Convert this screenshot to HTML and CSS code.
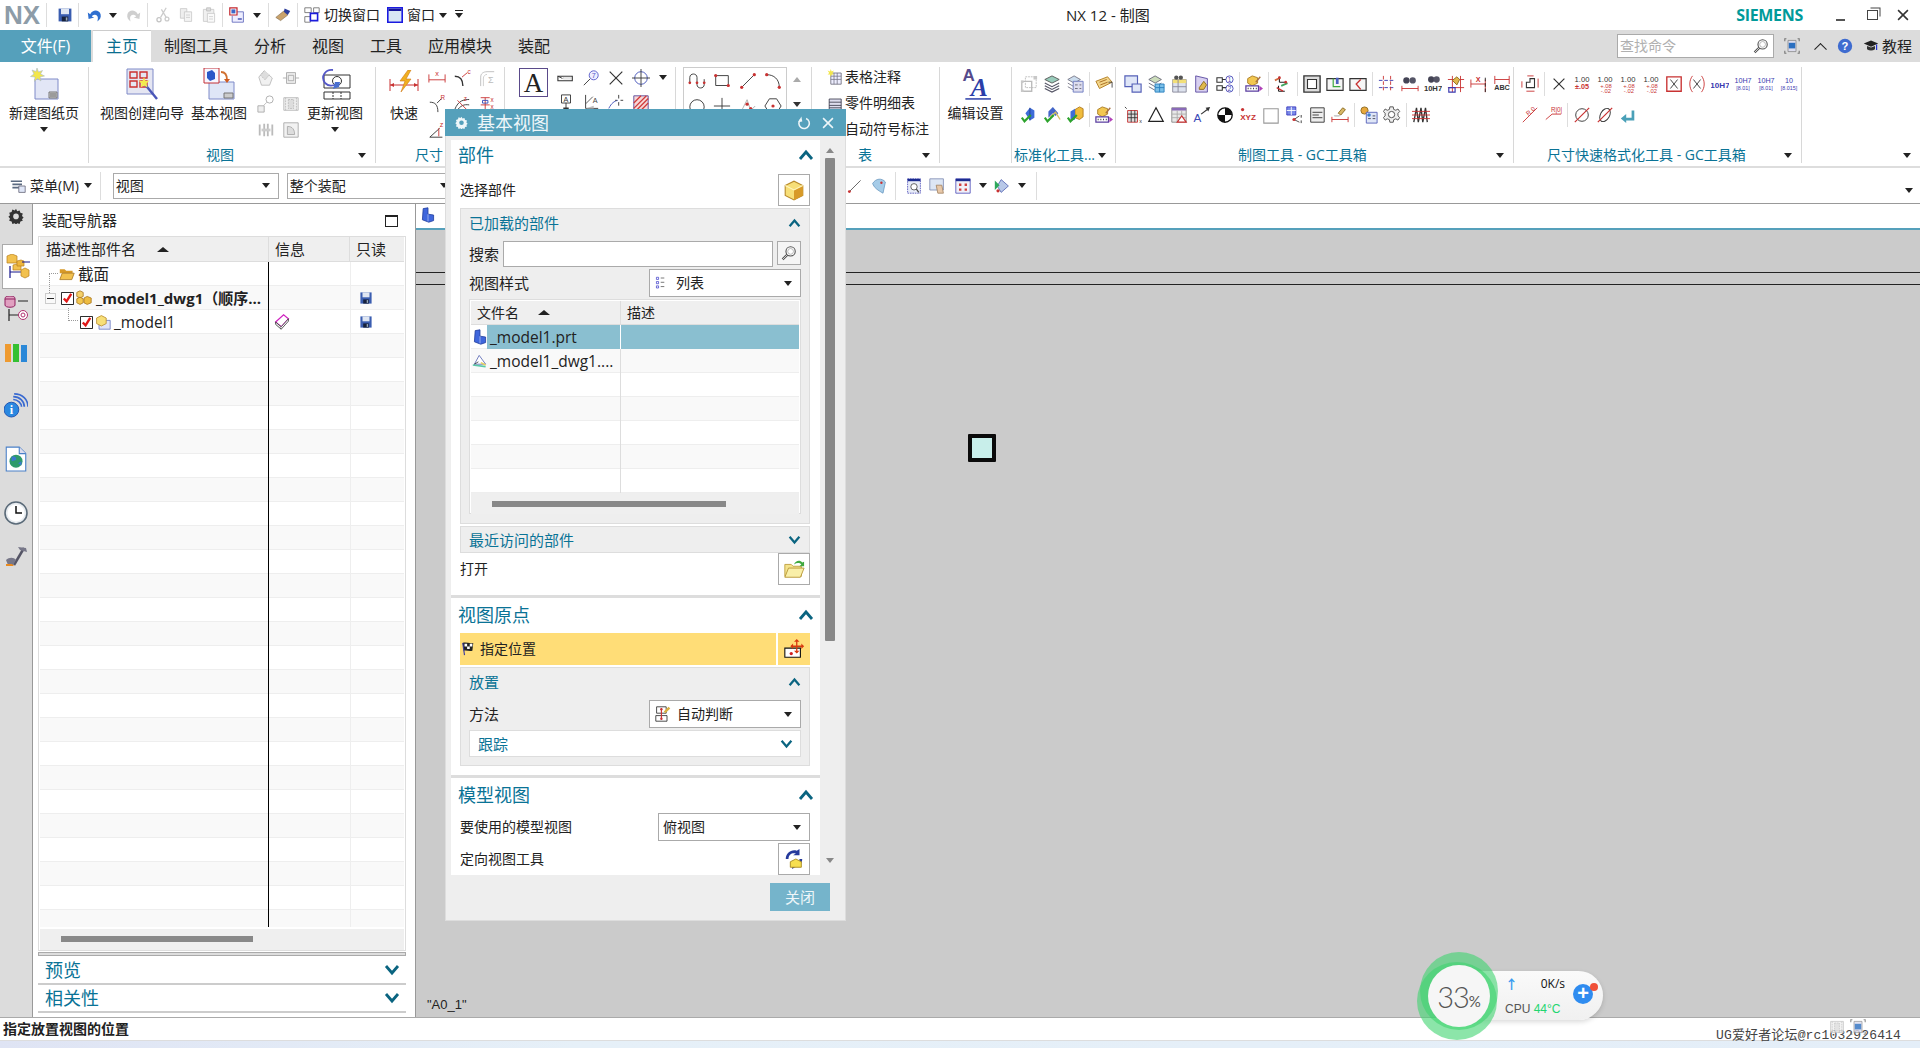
FILE: index.html
```html
<!DOCTYPE html>
<html lang="zh-CN">
<head>
<meta charset="utf-8">
<title>NX 12 - 制图</title>
<link rel="stylesheet" href="styles.css">
</head>
<body>
<svg class="defs" xmlns="http://www.w3.org/2000/svg">
<defs>
<symbol id="save" viewBox="0 0 20 20"><path d="M2 2h16v16H2z" fill="#3a5db0"/><path d="M5 2h10v7H5z" fill="#dfe6f2"/><path d="M6 12h8v6H6z" fill="#16213c"/><path d="M11 13h2v4h-2z" fill="#9ab"/></symbol>
<symbol id="undo" viewBox="0 0 20 20"><path d="M4 9c3-6 11-6 13 0 1 4-1 7-4 9 1-4 1-7-2-8-2-1-4 0-5 2l3 1-7 2-1-8z" fill="#2f6fd0"/></symbol>
<symbol id="redo" viewBox="0 0 20 20"><path d="M16 9C13 3 5 3 3 9c-1 4 1 7 4 9-1-4-1-7 2-8 2-1 4 0 5 2l-3 1 7 2 1-8z" fill="#cfcfcf"/></symbol>
<symbol id="cut" viewBox="0 0 20 20"><path d="M14 1 7 13M8 3l6 10" stroke="#ccc" stroke-width="1.6" fill="none"/><circle cx="5" cy="16" r="2.6" fill="none" stroke="#c4c4c4" stroke-width="1.6"/><circle cx="15" cy="15" r="2.4" fill="none" stroke="#ccc" stroke-width="1.6"/></symbol>
<symbol id="copy" viewBox="0 0 20 20"><path d="M3 2h8v12H3z" fill="#eee" stroke="#c8c8c8"/><path d="M8 6h9v12H8z" fill="#f4f4f4" stroke="#c8c8c8"/><path d="M10 10h5M10 13h5" stroke="#ccc"/></symbol>
<symbol id="paste" viewBox="0 0 20 20"><path d="M3 3h13v15H3z" fill="#f0f0f0" stroke="#c8c8c8"/><path d="M7 1h5v4H7z" fill="#ddd" stroke="#bbb"/><path d="M8 8h9v11H8z" fill="#fafafa" stroke="#c8c8c8"/><path d="M10 12h5M10 15h5" stroke="#ccc"/></symbol>
<symbol id="layers" viewBox="0 0 20 20"><path d="M8 6h10v13H4V11" fill="#eef" stroke="#5560b8"/><path d="M1 1h9v9H1z" fill="#fff" stroke="#c2262e" stroke-width="1.5"/><path d="M3 3h5v5H3z" fill="#3d68c8"/><path d="M11 15h5" stroke="#5560b8" stroke-width="2"/></symbol>
<symbol id="brush" viewBox="0 0 20 20"><path d="M1 13 11 5l5 5-9 7z" fill="#c9a26b" stroke="#7a6244" stroke-width=".7"/><path d="M12 2l7 3-3 5-5-4z" fill="#2b3c9a"/></symbol>
<symbol id="switch" viewBox="0 0 20 20"><path d="M1 1h8v6H1zM12 1h7v6h-7zM1 12h7v7H1z" fill="#fff" stroke="#666"/><path d="M8 8h9v9H8z" fill="#fff" stroke="#1c1cdc" stroke-width="2"/></symbol>
<symbol id="window" viewBox="0 0 20 20"><path d="M1 1h18v18H1z" fill="#d8e6f4" stroke="#1a1ae0" stroke-width="2"/><path d="M2 2h16v3H2z" fill="#15159a"/></symbol>
<symbol id="help" viewBox="0 0 20 20"><circle cx="10" cy="10" r="9" fill="#3f6cd0"/><text x="10" y="15" font-size="14" font-weight="700" font-family="Liberation Sans" text-anchor="middle" fill="#fff">?</text></symbol>
<symbol id="cap" viewBox="0 0 20 20"><path d="M1 7l9-4 9 4-9 4z" fill="#222"/><path d="M5 10v4c3 2 7 2 10 0v-4l-5 2z" fill="#333"/><path d="M17 8v7" stroke="#2433d0" stroke-width="1.5"/></symbol>
<symbol id="ribmin" viewBox="0 0 20 20"><path d="M3 1H1v3M17 1h2v3M3 19H1v-3M17 19h2v-3" fill="none" stroke="#777" stroke-width="1.4"/><path d="M5 3h10v14H5z" fill="#dde" stroke="#888"/><path d="M6 6h8v7H6z" fill="#2b6fc0"/></symbol>
<symbol id="mag" viewBox="0 0 20 20"><circle cx="12" cy="8" r="5.8" fill="#fff" stroke="#555" stroke-width="1.4"/><circle cx="12" cy="8" r="3.6" fill="none" stroke="#aaa"/><path d="M8 12 2 18" stroke="#555" stroke-width="3"/><path d="M8 12 2 18" stroke="#eee" stroke-width="1"/></symbol>
<symbol id="newsheet" viewBox="0 0 32 32"><path d="M7 11h23v20H7z" fill="#e2e6f6" stroke="#7f8ac8"/><path d="M21 24h8v6h-8z" fill="#d0d0d0" stroke="#777"/><path d="M22 26h6M22 28h6" stroke="#666"/><path d="M9 0l1.500 4 4-1.500-2 3.500 4 2-4.500 1 1 4-3.500-2.500-3 3 .5-4.500-4.500-.5 3.500-2.500-2-4 4 1.500z" fill="#f2e64a" stroke="#a8b8d0" stroke-width=".6"/></symbol>
<symbol id="wizard" viewBox="0 0 32 32"><path d="M1 1h26v25H1z" fill="#e5e6f2" stroke="#7f8ac8"/><path d="M4 4h7v6H4zM14 4h7v6h-7zM4 13h7v6H4zM14 13h7v6h-7z" fill="none" stroke="#cc3030" stroke-width="1.4"/><path d="M17 14l14 17" stroke="#4a56b8" stroke-width="2.400"/><path d="M18 9l1.500 4 4-.5-3 3 1 4-3.500-2-3.500 2 1-4-3-3 4 .5z" fill="#f3ea4c"/></symbol>
<symbol id="basicview" viewBox="0 0 32 32"><path d="M6 14h25v17H6z" fill="#dfe6f7" stroke="#7f8ac8"/><path d="M21 25h9v5h-9z" fill="#ccc" stroke="#777"/><path d="M1 0h15v15H1z" fill="#f7f7ff" stroke="#c43036"/><path d="M4 4l5-2 3 3v6l-5 2-3-3z" fill="#2b58c8"/><path d="M18 4c4 0 6 3 6 8" stroke="#d07030" stroke-width="1.800" fill="none"/><path d="M21 11h6l-3 4z" fill="#d05a20"/></symbol>
<symbol id="update" viewBox="0 0 32 32"><path d="M5 7h26v13H5z" fill="#fff" stroke="#333"/><circle cx="18" cy="13" r="4.500" fill="none" stroke="#333"/><path d="M5 24h26v7H5z" fill="#fff" stroke="#333"/><path d="M14 24v7M22 24v7" stroke="#333" stroke-dasharray="2 1"/><path d="M14 2C7 1 1 8 6 15c3 3 6 3 9 2" stroke="#5558c8" stroke-width="1.800" fill="none"/><path d="M16 14h5l-1 5-6 2z" fill="#4a6fd0"/></symbol>
<symbol id="quick" viewBox="0 0 30 22"><path d="M1 15h28M1 9v12M29 9v12" stroke="#c83232" fill="none"/><path d="M1 15l4-2v4zM29 15l-4-2v4z" fill="#c83232"/><path d="M19 0 11 11l5 0-4 11 10-13h-5l5-9z" fill="#f0b020" stroke="#d07818" stroke-width=".6"/></symbol>
<symbol id="bigA" viewBox="0 0 30 30"><text x="15" y="26" font-size="30" font-family="Liberation Serif" text-anchor="middle" fill="#222">A</text></symbol>
<symbol id="editA" viewBox="0 0 30 30"><text x="8" y="12" font-size="16" font-family="Liberation Sans" font-weight="700" text-anchor="middle" fill="#554a8c">A</text><text x="18" y="26" font-size="24" font-family="Liberation Serif" font-style="italic" font-weight="700" text-anchor="middle" fill="#2b3ea8">A</text><path d="M5 29h24" stroke="#2b3ea8" stroke-width="1.400"/></symbol>
<symbol id="g1" viewBox="0 0 20 20"><path d="M2 9l6-7 9 8-3 8H5z" fill="#f1f1f1" stroke="#bbb"/><path d="M8 2l-4 5 5 5 5-6" fill="#ddd" stroke="#bbb" stroke-dasharray="2 1"/></symbol>
<symbol id="g2" viewBox="0 0 20 20"><path d="M5 4h10v12H5z" fill="#eee" stroke="#aaa"/><path d="M7 7h6v6H7zM1 10h4M15 10h4" fill="none" stroke="#aaa"/></symbol>
<symbol id="g3" viewBox="0 0 20 20"><path d="M1 12h7v7H1z" fill="#eee" stroke="#aaa"/><circle cx="14" cy="5" r="4" fill="#fff" stroke="#aaa"/><path d="M7 12l4-4" stroke="#bbb"/></symbol>
<symbol id="g4" viewBox="0 0 20 20"><path d="M2 3h16v14H2z" fill="#f0f0f0" stroke="#bbb"/><path d="M4 3v14M16 3v14M7 5h6v10H7z" fill="#ddd" stroke="#bbb" stroke-dasharray="2 1"/></symbol>
<symbol id="g5" viewBox="0 0 20 20"><path d="M3 4v12M8 3v14M12 3v14M17 4v12" stroke="#bbb" stroke-width="2" fill="none"/><path d="M5 10h10" stroke="#ccc" stroke-width="3"/></symbol>
<symbol id="g6" viewBox="0 0 20 20"><path d="M2 2h16v16H2z" fill="#f2f2f2" stroke="#aaa"/><path d="M6 6c6 0 8 4 8 9H6z" fill="#ddd" stroke="#aaa"/></symbol>
<symbol id="dim1" viewBox="0 0 20 20"><path d="M1 6v9M19 6v9M1 12h18" stroke="#c83232" fill="none"/><text x="10" y="8" font-size="8" font-family="Liberation Sans" text-anchor="middle" fill="#c83232">x</text></symbol>
<symbol id="dim2" viewBox="0 0 20 20"><path d="M2 8c6 0 9 3 9 11" stroke="#333" stroke-width="1.500" fill="none"/><path d="M10 9l6-5" stroke="#c83232"/><text x="16" y="6" font-size="7" font-family="Liberation Sans" fill="#c83232">c</text></symbol>
<symbol id="dim3" viewBox="0 0 20 20"><path d="M3 19V9c0-4 3-6 7-6h8" stroke="#bbb" fill="none"/><path d="M6 19V10c0-2 2-4 4-4" stroke="#ccc" fill="none"/><text x="11" y="16" font-size="10" fill="#bbb" font-family="Liberation Sans">Σ</text></symbol>
<symbol id="dim4" viewBox="0 0 20 20"><path d="M2 8c6 0 9 3 9 11" stroke="#333" fill="none"/><path d="M10 9l5-5" stroke="#333"/><text x="14" y="6" font-size="7" font-family="Liberation Sans" fill="#c83232">R</text></symbol>
<symbol id="dim5" viewBox="0 0 20 20"><path d="M2 16C6 6 12 5 18 5M4 18C8 12 12 10 18 11" stroke="#333" fill="none"/><path d="M5 6l10 10" stroke="#c83232"/><text x="12" y="7" font-size="7" fill="#c83232" font-family="Liberation Sans">z</text></symbol>
<symbol id="dim6" viewBox="0 0 20 20"><path d="M3 3h10M3 11h10M8 3v16M3 19h10" stroke="#c83232" fill="none"/><path d="M5 6h6v3H5z" fill="none" stroke="#3347b8"/><text x="14" y="8" font-size="7" fill="#c83232" font-family="Liberation Sans">x</text><text x="14" y="15" font-size="7" fill="#c83232" font-family="Liberation Sans">x</text></symbol>
<symbol id="dim7" viewBox="0 0 20 20"><path d="M13 8 2 18h14" stroke="#333" fill="none"/><path d="M12 8v9" stroke="#c83232"/><text x="13" y="7" font-size="8" fill="#c83232" font-family="Liberation Sans">z</text></symbol>
<symbol id="ldr" viewBox="0 0 20 20"><path d="M1 8h16v5H1z" fill="#fff" stroke="#333" stroke-width="1.200"/><path d="M1 8l5 2.500" stroke="#333"/><path d="M7 9h9v2H7z" fill="#fff" stroke="#aaa" stroke-width=".5"/></symbol>
<symbol id="balloon" viewBox="0 0 20 20"><circle cx="13" cy="7" r="5" fill="#eef" stroke="#5558c8"/><text x="13" y="10" font-size="8" font-family="Liberation Sans" text-anchor="middle" fill="#5558c8">7</text><path d="M9 11 2 18" stroke="#333"/></symbol>
<symbol id="xm" viewBox="0 0 20 20"><path d="M3 3l14 14M17 3 3 17" stroke="#333" stroke-width="1.300"/></symbol>
<symbol id="target" viewBox="0 0 20 20"><circle cx="10" cy="10" r="7" fill="none" stroke="#3f4fb8"/><path d="M10 0v20M0 10h20" stroke="#333"/></symbol>
<symbol id="symA" viewBox="0 0 20 20"><path d="M5 1h10v9H5z" fill="#fff" stroke="#333"/><text x="10" y="9" font-size="8" font-family="Liberation Sans" text-anchor="middle" fill="#333">A</text><path d="M10 10v6" stroke="#333"/><path d="M7 16h6" stroke="#333" stroke-width="2"/></symbol>
<symbol id="rough" viewBox="0 0 20 20"><path d="M4 1v15h14" stroke="#333" fill="none"/><path d="M4 11l8-8" stroke="#555"/><text x="12" y="10" font-size="8" font-family="Liberation Sans" fill="#444">A</text><path d="M4 16l9-3v3" fill="#bbb"/></symbol>
<symbol id="cen" viewBox="0 0 20 20"><path d="M2 16C5 10 8 8 12 7" stroke="#3f4fb8" fill="none"/><path d="M13 1v4M13 9v4M9 7h2M15 7h3" stroke="#333"/></symbol>
<symbol id="hatch" viewBox="0 0 20 20"><path d="M2 2h16v16H2z" fill="#f7d7d7" stroke="#5a4a9a"/><path d="M2 10l8-8M2 16 16 2M5 18 18 5M10 18l8-8" stroke="#d03a3a" stroke-width="1.400"/></symbol>
<symbol id="sk1" viewBox="0 0 20 20"><path d="M2 12V6c0-5 8-5 8 0v8c0 5 8 5 8 0V8" stroke="#333" fill="none"/><circle cx="2" cy="12" r="1.500" fill="#c83232"/><circle cx="18" cy="12" r="1.500" fill="#c83232"/><circle cx="10" cy="12" r="1.500" fill="#c83232"/></symbol>
<symbol id="sk2" viewBox="0 0 20 20"><path d="M3 4h14v11H3z" fill="none" stroke="#333"/><circle cx="3" cy="4" r="1.800" fill="#c83232"/><circle cx="17" cy="15" r="1.800" fill="#c83232"/></symbol>
<symbol id="sk3" viewBox="0 0 20 20"><path d="M3 17 17 3" stroke="#333"/><circle cx="3" cy="17" r="1.800" fill="#c83232"/><circle cx="17" cy="3" r="1.800" fill="#c83232"/></symbol>
<symbol id="sk4" viewBox="0 0 20 20"><path d="M3 3c8 0 14 5 14 14" stroke="#333" fill="none"/><circle cx="3" cy="3" r="1.800" fill="#c83232"/><circle cx="17" cy="17" r="1.800" fill="#c83232"/></symbol>
<symbol id="sk5" viewBox="0 0 20 20"><circle cx="10" cy="11" r="8" fill="none" stroke="#333"/></symbol>
<symbol id="sk6" viewBox="0 0 20 20"><path d="M10 1v18M1 10h18" stroke="#333"/></symbol>
<symbol id="sk7" viewBox="0 0 20 20"><path d="M2 17 9 3l4 12 5-5" stroke="#aaa" fill="none"/><circle cx="9" cy="8" r="1.800" fill="#c83232"/><circle cx="13" cy="13" r="1.800" fill="#c83232"/></symbol>
<symbol id="sk8" viewBox="0 0 20 20"><path d="M6 2h8l5 8-5 8H6l-5-8z" fill="none" stroke="#333"/><circle cx="10" cy="10" r="1.800" fill="#c83232"/></symbol>
<symbol id="tb1" viewBox="0 0 20 20"><path d="M6 5h13v14H6z" fill="#eef" stroke="#667"/><path d="M6 9h13M6 13h13M10 5v14M14 5v14" stroke="#778"/><path d="M6 0l1 3 3-1-2 3 2 2-3 0-1 3-1-3-3 0 2-2-2-3 3 1z" fill="#f2e64a"/></symbol>
<symbol id="tb2" viewBox="0 0 20 20"><path d="M4 5h15v14H4z" fill="#dde" stroke="#334"/><path d="M4 9h15M4 13h15M4 16h15" stroke="#334"/></symbol>
<symbol id="s1" viewBox="0 0 20 20"><path d="M2 7h11v11H2z" fill="none" stroke="#bbb" stroke-width="1.500"/><path d="M6 2h12v12H6z" fill="none" stroke="#bbb" stroke-dasharray="2 1"/><path d="M1 6h3v3H1zM15 1h4v4h-4zM1 16h3v3H1z" fill="#c8c8c8"/></symbol>
<symbol id="s2" viewBox="0 0 20 20"><path d="M2 5l8-4 8 4-8 4z" fill="#9cb" stroke="#555"/><path d="M2 9l8 4 8-4M2 12l8 4 8-4M2 15l8 4 8-4" fill="none" stroke="#556" stroke-width="1.300"/></symbol>
<symbol id="s3" viewBox="0 0 20 20"><path d="M2 5l7-4 7 4-7 4z" fill="#cde" stroke="#778"/><path d="M2 9l7 4M2 13l7 4" stroke="#778" fill="none"/><path d="M8 7h11v12H8z" fill="#dde" stroke="#6a78c0"/><path d="M10 11h3M15 11h2M10 15h3M15 15h2" stroke="#667"/></symbol>
<symbol id="s4" viewBox="0 0 20 20"><path d="M1 7l13-5 5 6-14 7z" fill="#f3d68a" stroke="#b07a20"/><path d="M5 8l8-3M6 11l8-3" stroke="#a5661c"/><path d="M15 8h4v6" stroke="#444" fill="none"/></symbol>
<symbol id="s5" viewBox="0 0 20 20"><path d="M6 8l5-6 5 3v8l-5 3z" fill="#3e6cd8"/><path d="M11 2v14" stroke="#1f3c8e"/><path d="M2 13l3 4 7-7" stroke="#2da32d" stroke-width="2.400" fill="none"/></symbol>
<symbol id="s6" viewBox="0 0 20 20"><path d="M6 6l5-5 6 7-3 3-3-3-5 5z" fill="#4466c8"/><path d="M8 12l6-5 5 8" stroke="#d8c060" stroke-width="1.500" fill="none"/><path d="M2 13l3 4 7-7" stroke="#2da32d" stroke-width="2.400" fill="none"/></symbol>
<symbol id="s7" viewBox="0 0 20 20"><path d="M10 4l5-3 4 2v9l-4 3-5-2z" fill="#f0bc3c" stroke="#b07a20"/><path d="M5 6l5-3v12l-5 2z" fill="#3e6cd8"/><path d="M2 13l3 4 7-7" stroke="#2da32d" stroke-width="2.400" fill="none"/></symbol>
<symbol id="cubebar" viewBox="0 0 20 20"><path d="M3 4l5-3 6 2v6l-6 3-5-3z" fill="#f2c750" stroke="#a87a22"/><path d="M1 12h14v6H1z" fill="#fff" stroke="#5a3ea0" stroke-width="1.400"/><path d="M3 15h1M6 15h1M9 15h1M12 15h1" stroke="#333" stroke-width="1.500"/><path d="M16 12l4 3-4 3z" fill="#b040b8"/><path d="M12 8l5-6" stroke="#a87040" stroke-width="1.500"/></symbol>
<symbol id="d1" viewBox="0 0 20 20"><path d="M1 1h14v12H1z" fill="#dfe6f7" stroke="#5560b8" stroke-width="1.300"/><path d="M9 10h10v9H9z" fill="#dfe6f7" stroke="#5560b8" stroke-width="1.300"/></symbol>
<symbol id="d2" viewBox="0 0 20 20"><path d="M2 5l7-4 7 4-7 4z" fill="#cdb" stroke="#667"/><path d="M2 9l7 4 7-4M2 13l7 4" stroke="#667" fill="none"/><path d="M9 10h10v9H9z" fill="#7cc0e8" stroke="#2a80c0"/><path d="M9 14h10M14 10v9" stroke="#2a80c0"/></symbol>
<symbol id="d3" viewBox="0 0 20 20"><path d="M3 5h15v14H3z" fill="#dde2ee" stroke="#889"/><path d="M3 5h15v4H3z" fill="#f2df78"/><path d="M3 13h15M9 5v14" stroke="#889"/><circle cx="7" cy="3" r="2.400" fill="#555"/><circle cx="12" cy="3" r="2.400" fill="#555"/></symbol>
<symbol id="d4" viewBox="0 0 20 20"><path d="M3 1l13 3v15H3z" fill="#d8d0f0" stroke="#5a4aa0"/><path d="M7 14l5-7 3 4-3 5H7z" fill="#e0b84c" stroke="#8a6a20"/></symbol>
<symbol id="d5" viewBox="0 0 20 20"><path d="M1 3h6v5H1zM1 12h6v5H1zM7 5h5M7 14h5" fill="none" stroke="#333" stroke-width="1.200"/><circle cx="15" cy="5" r="4" fill="#fff" stroke="#4a4ab8"/><circle cx="15" cy="15" r="4" fill="#fff" stroke="#4a4ab8"/><text x="15" y="8" font-size="7" text-anchor="middle" fill="#4a4ab8" font-family="Liberation Sans">1</text><text x="15" y="18" font-size="7" text-anchor="middle" fill="#4a4ab8" font-family="Liberation Sans">2</text></symbol>
<symbol id="d7" viewBox="0 0 20 20"><path d="M6 8V2M6 8h7M5 18v-6M5 18h7" stroke="#222" stroke-width="1.200"/><path d="M1 6l6-3" stroke="#d06a40" stroke-width="2"/><path d="M8 12l7-3" stroke="#40a860" stroke-width="2"/><circle cx="6" cy="3" r="1.500" fill="#c83232"/><circle cx="13" cy="8" r="1.500" fill="#c83232"/><path d="M3 14l7 4" stroke="#c83232" stroke-width="1.500"/></symbol>
<symbol id="d8" viewBox="0 0 20 20"><path d="M1 1h18v18H1z" fill="#ddd" stroke="#333" stroke-width="1.500"/><path d="M5 5h10v10H5z" fill="#fff" stroke="#333" stroke-width="1.200"/></symbol>
<symbol id="d9" viewBox="0 0 20 20"><path d="M1 4h18v13H1z" fill="#f6f6f6" stroke="#333" stroke-width="1.300"/><path d="M8 4v9h8" stroke="#3ba83b" stroke-width="1.300" fill="none"/><path d="M11 3h3v7h-3z" fill="#4a60c0"/></symbol>
<symbol id="d10" viewBox="0 0 20 20"><path d="M1 4h18v13H1z" fill="#f6f6f6" stroke="#333" stroke-width="1.300"/><path d="M13 5 8 10l5 6" stroke="#c83232" stroke-width="1.500" fill="none"/></symbol>
<symbol id="d11" viewBox="0 0 20 20"><path d="M1 6h18M1 14h18" stroke="#3a3ab0" stroke-dasharray="4 2"/><path d="M6 1v18M14 1v18" stroke="#c83232" stroke-dasharray="4 2"/></symbol>
<symbol id="d12" viewBox="0 0 20 20"><circle cx="6" cy="6" r="3.500" fill="#445"/><circle cx="13" cy="6" r="3.500" fill="#556"/><path d="M1 15h18M1 12v6M19 12v6" stroke="#c83232" fill="none"/></symbol>
<symbol id="d13" viewBox="0 0 20 20"><circle cx="8" cy="5" r="3.500" fill="#445"/><circle cx="14" cy="5" r="3.500" fill="#556"/><text x="10" y="18" font-size="8.500" font-weight="700" text-anchor="middle" fill="#333" font-family="Liberation Sans">10H7</text></symbol>
<symbol id="d14" viewBox="0 0 20 20"><path d="M1 5h18M1 14h18M6 1v18M15 1v18" stroke="#c83232"/><path d="M6 6l5-4 3 3-3 6z" fill="#e0b84c" stroke="#8a6a20"/><path d="M2 14h7v5H2z" fill="none" stroke="#3a3ab0" stroke-width="1.300"/></symbol>
<symbol id="d15" viewBox="0 0 20 20"><path d="M1 5v9M17 5v14M1 10h16" stroke="#c83232" fill="none"/><path d="M17 3v16" stroke="#222" stroke-dasharray="4 2"/><text x="9" y="8" font-size="8" font-weight="700" text-anchor="middle" fill="#c83232" font-family="Liberation Sans">X</text></symbol>
<symbol id="d16" viewBox="0 0 20 20"><path d="M2 1v9M18 1v9M2 5h16" stroke="#c83232" fill="none"/><text x="10" y="17" font-size="8" font-weight="700" text-anchor="middle" fill="#333" font-family="Liberation Sans">ABC</text></symbol>
<symbol id="r1" viewBox="0 0 20 20"><path d="M4 5h11v13H4z" fill="#ddd" stroke="#c83232"/><path d="M4 9h11M4 13h11M8 5v13M12 5v13" stroke="#333"/><path d="M1 1l2 2" stroke="#333"/><text x="17" y="19" font-size="6" fill="#333" font-family="Liberation Sans">x</text></symbol>
<symbol id="r2" viewBox="0 0 20 20"><path d="M10 2 18 17H2z" fill="none" stroke="#222" stroke-width="1.400"/></symbol>
<symbol id="r3" viewBox="0 0 20 20"><path d="M2 2h16v16H2z" fill="#e8e8e8" stroke="#888"/><path d="M2 2h16v3H2z" fill="#8a6ab8"/><path d="M2 9h16M2 13h16M8 5v13M13 5v13" stroke="#aaa"/><path d="M13 11l5 7H8z" fill="#fff" stroke="#c83232" stroke-width="1.300"/></symbol>
<symbol id="r4" viewBox="0 0 20 20"><text x="5" y="18" font-size="13" text-anchor="middle" fill="#3a4ab8" font-family="Liberation Sans">A</text><path d="M9 9 17 3" stroke="#333" stroke-width="1.300"/><path d="M19 1l-5 1 3 4z" fill="#333"/></symbol>
<symbol id="r5" viewBox="0 0 20 20"><circle cx="10" cy="10" r="8" fill="#fff" stroke="#111" stroke-width="1.500"/><path d="M10 2a8 8 0 0 1 8 8h-8zM10 18a8 8 0 0 1-8-8h8z" fill="#111"/></symbol>
<symbol id="r6" viewBox="0 0 20 20"><circle cx="4" cy="4" r="1.800" fill="#c83232"/><text x="10" y="16" font-size="9" font-weight="700" text-anchor="middle" fill="#c83232" font-family="Liberation Sans">XYZ</text></symbol>
<symbol id="r7" viewBox="0 0 20 20"><path d="M2 3h16v16H2z" fill="#fff" stroke="#999" stroke-width="1.200"/></symbol>
<symbol id="r8" viewBox="0 0 20 20"><path d="M2 1h10v9H2z" fill="#7a8ae8" stroke="#3a3ac0"/><path d="M2 5h10M7 1v9" stroke="#fff"/><path d="M10 15l6-4M10 15l6 3" stroke="#444"/><circle cx="10" cy="15" r="1.800" fill="#c83232"/><path d="M18 10v3M18 16v3" stroke="#333"/></symbol>
<symbol id="r9" viewBox="0 0 20 20"><path d="M3 2h15v16H3z" fill="#eee" stroke="#333"/><path d="M5 7h11M5 10h7M5 13h11" stroke="#333"/></symbol>
<symbol id="r10" viewBox="0 0 20 20"><path d="M8 8l5-6 3 2-5 6z" fill="#d8b868" stroke="#8a6a20"/><path d="M3 10h8l-2 2H4z" fill="#ccc"/><path d="M1 15h18M1 12v6M19 12v6" stroke="#c83232" fill="none"/></symbol>
<symbol id="r11" viewBox="0 0 20 20"><circle cx="5" cy="5" r="4" fill="#e8a83c" stroke="#8a6a20"/><path d="M7 7h12v12H7z" fill="#dfe6f7" stroke="#5560b8"/><circle cx="10" cy="10" r="2" fill="#3f7fd0"/><path d="M9 14h3M14 14h3M14 11h3" stroke="#445"/></symbol>
<symbol id="r12" viewBox="0 0 20 20"><path d="M8 1h4l.500 3 2.500 1 2.500-1.500 2 3-2 2v3l2 2-2 3-2.500-1.500-2.500 1-.5 3H8l-.5-3-2.500-1-2.500 1.500-2-3 2-2v-3l-2-2 2-3L5 5l2.500-1z" fill="#eee" stroke="#444" transform="scale(.95)"/><circle cx="9.500" cy="9.500" r="3.500" fill="#fff" stroke="#444"/></symbol>
<symbol id="r13" viewBox="0 0 20 20"><path d="M2 18 5 2l2 16L10 2l2 16 3-16 2 16" stroke="#333" stroke-width="1.500" fill="none"/><path d="M0 6h20M0 10h20M0 14h20" stroke="#c83232"/></symbol>
<symbol id="q1" viewBox="0 0 20 20"><path d="M6 14V8h4V4h5v10z" fill="#fff" stroke="#333" stroke-width="1.200"/><path d="M1 7v7M19 4v10M7 1h7M6 18h9" stroke="#c83232" fill="none"/></symbol>
<symbol id="qx" viewBox="0 0 20 20"><path d="M4 4l12 12M16 4 4 16" stroke="#333" stroke-width="1.300"/></symbol>
<symbol id="num1" viewBox="0 0 20 20"><text x="10" y="8" font-size="8.500" text-anchor="middle" fill="#333" font-family="Liberation Sans">1.00</text><text x="10" y="16" font-size="8" font-weight="700" text-anchor="middle" fill="#c83232" font-family="Liberation Sans">±.05</text></symbol>
<symbol id="num2" viewBox="0 0 20 20"><text x="10" y="8" font-size="8.500" text-anchor="middle" fill="#333" font-family="Liberation Sans">1.00</text><text x="11" y="14" font-size="6.500" text-anchor="middle" fill="#c83232" font-family="Liberation Sans">+.08</text><text x="11" y="20" font-size="6.500" text-anchor="middle" fill="#c83232" font-family="Liberation Sans">-.02</text></symbol>
<symbol id="boxx" viewBox="0 0 20 20"><path d="M2 2h16v16H2z" fill="#fff" stroke="#c83232" stroke-width="1.500"/><path d="M6 5l8 10M14 5 6 15" stroke="#333"/></symbol>
<symbol id="parx" viewBox="0 0 20 20"><path d="M5 1C1 6 1 14 5 19M15 1c4 5 4 13 0 18" stroke="#c83232" fill="none"/><path d="M6 5l8 10M14 5 6 15" stroke="#333"/></symbol>
<symbol id="t1" viewBox="0 0 20 20"><text x="10" y="14" font-size="9" font-weight="700" text-anchor="middle" fill="#3a3ab0" font-family="Liberation Sans">10H7</text></symbol>
<symbol id="t2" viewBox="0 0 20 20"><text x="10" y="9" font-size="8" text-anchor="middle" fill="#3a3ab0" font-family="Liberation Sans">10H7</text><text x="10" y="17" font-size="6" text-anchor="middle" fill="#3a3ab0" font-family="Liberation Sans">[8.01]</text></symbol>
<symbol id="t3" viewBox="0 0 20 20"><text x="10" y="9" font-size="8" text-anchor="middle" fill="#3a3ab0" font-family="Liberation Sans">10</text><text x="10" y="17" font-size="6" text-anchor="middle" fill="#3a3ab0" font-family="Liberation Sans">[8.015]</text></symbol>
<symbol id="qr1" viewBox="0 0 20 20"><path d="M2 18 18 2" stroke="#c83232"/><text x="8" y="11" font-size="7" transform="rotate(-40 8 11)" fill="#c83232" font-family="Liberation Sans">R.0</text></symbol>
<symbol id="qr2" viewBox="0 0 20 20"><path d="M2 15 9 9h10" stroke="#c83232" fill="none"/><text x="14" y="7" font-size="7" text-anchor="middle" fill="#c83232" font-family="Liberation Sans">R|0|</text></symbol>
<symbol id="qr3" viewBox="0 0 20 20"><circle cx="10" cy="10" r="7" fill="#fff" stroke="#333"/><path d="M2 18 18 2" stroke="#c83232" stroke-width="1.300"/></symbol>
<symbol id="qr4" viewBox="0 0 20 20"><ellipse cx="10" cy="10" rx="5" ry="8" transform="rotate(30 10 10)" fill="#fff" stroke="#333"/><path d="M2 18 18 2" stroke="#c83232" stroke-width="1.300"/></symbol>
<symbol id="qr5" viewBox="0 0 20 20"><path d="M14 5v8H8V9l-6 5 6 5v-3h9V5z" fill="#4aa0b8"/></symbol>
<symbol id="menu" viewBox="0 0 20 20"><path d="M1 3h14v2H1zM3 7h12v2H3zM3 11h12v2H3z" fill="#5a6a80"/><path d="M11 10h8v8h-8z" fill="#dfe6f7" stroke="#667"/></symbol>
<symbol id="line" viewBox="0 0 20 20"><path d="M3 17 17 3" stroke="#444"/><circle cx="3" cy="17" r="1.800" fill="#c83232"/></symbol>
<symbol id="face" viewBox="0 0 20 20"><path d="M2 7c4-7 12-7 16-2l-3 14c-5-3-11-6-13-12z" fill="#a6cce8" stroke="#6a98c0"/><circle cx="13" cy="6" r="1.500" fill="#c83232"/></symbol>
<symbol id="vfit" viewBox="0 0 20 20"><path d="M2 1h16v18H2z" fill="#e8ecf8" stroke="#4a4ab8" stroke-dasharray="2 1"/><path d="M2 1h16v3H2z" fill="#1c2c90"/><circle cx="10" cy="11" r="4" fill="#fff" stroke="#444"/><path d="M13 14l3 4" stroke="#444" stroke-width="1.500"/></symbol>
<symbol id="vhand" viewBox="0 0 20 20"><path d="M1 1h17v14H1z" fill="#dde6f4" stroke="#7a88b0"/><path d="M9 9h7l2 10h-7z" fill="#e8c8a8" stroke="#a08060"/></symbol>
<symbol id="vgrid" viewBox="0 0 20 20"><path d="M1 1h18v18H1z" fill="#f0f0f8" stroke="#4a4ab8"/><path d="M1 1h18v3H1z" fill="#1c2c90"/><path d="M5 7h3v3H5zM12 7h3v3h-3zM5 13h3v3H5zM12 13h3v3h-3z" fill="#d04040"/></symbol>
<symbol id="vdia" viewBox="0 0 20 20"><path d="M9 2l9 8-9 8-5-8z" fill="#b8c8e8" stroke="#5060b0"/><path d="M1 3l6 6-6 6z" fill="#2da85a"/><circle cx="5" cy="16" r="2" fill="#c83232"/></symbol>
<symbol id="partblue" viewBox="0 0 20 20"><path d="M4 2l6-1v8l7 1v7l-6 2-8-3z" fill="#3f66dc" stroke="#1f3c9c"/><path d="M10 9v9" stroke="#a8bcf0"/></symbol>
<symbol id="draft" viewBox="0 0 20 20"><path d="M3 14 9 3l8 11z" fill="#fff" stroke="#5060b0"/><path d="M1 15l16 2" stroke="#5ac8a8" stroke-width="2"/><path d="M3 14l5-3" stroke="#333"/><path d="M11 12l6 3" stroke="#e8d060" stroke-width="2"/></symbol>
<symbol id="cubes" viewBox="0 0 20 20"><path d="M1 3l4-2 4 2v5l-4 2-4-2z" fill="#f4d06a" stroke="#a8761e"/><path d="M1 11l4-2 4 2v5l-4 2-4-2z" fill="#f4c850" stroke="#a8761e"/><path d="M10 10l4-2 5 2v6l-5 2-4-2z" fill="#eebc40" stroke="#a8761e"/></symbol>
<symbol id="cube" viewBox="0 0 20 20"><path d="M2 6l8-4 8 4v9l-8 4-8-4z" fill="#f7df78" stroke="#b88a2a"/><path d="M10 10v9l8-4V6z" fill="#d89a28"/><path d="M2 6l8 4 8-4" stroke="#fff6c0" fill="none"/></symbol>
<symbol id="cubedoc" viewBox="0 0 20 20"><path d="M5 8h14v11H5z" fill="#e0e4f8" stroke="#6a78c0"/><path d="M2 5l6-3 6 3v7l-6 3-6-3z" fill="#f7df78" stroke="#b88a2a"/></symbol>
<symbol id="folder" viewBox="0 0 20 20"><path d="M1 4h6l2 2h8v3H1z" fill="#d89a28"/><path d="M1 17 4 9h15l-3 8z" fill="#f2c14e" stroke="#a8761e"/></symbol>
<symbol id="folderopen" viewBox="0 0 24 24"><path d="M2 7h7l2 2h9v11H2z" fill="#f4e38c" stroke="#c0a040"/><path d="M2 21l4-10h17l-4 10z" fill="#f9efa8" stroke="#b89838"/><path d="M12 7c2-5 7-5 9-2l2-1v5h-5l2-2c-2-2-5-2-8 0z" fill="#3fa83f"/></symbol>
<symbol id="book" viewBox="0 0 20 20"><path d="M2 10 12 1l6 5-9 10z" fill="#fff" stroke="#d020c0" stroke-width="1.500"/><path d="M2 10l7 6v3L2 13z" fill="#eee" stroke="#333"/><path d="M9 16l9-10v3l-9 10" fill="#fff" stroke="#333"/></symbol>
<symbol id="check" viewBox="0 0 14 14"><path d="M.5.5h13v13H.5z" fill="#fff" stroke="#111"/><path d="M3 7l3 3 5-8" stroke="#e01818" stroke-width="2.600" fill="none"/></symbol>
<symbol id="gear" viewBox="0 0 20 20"><path d="M10 1l1.500 3 3-1 1 3 3 1-1 3 2 2-2 2 1 2-3 1-1 3-3-1-1.500 2-1.500-2-3 1-1-3-3-1 1-3-2-2 2-2-1-3 3-1 1-3 3 1z" fill="currentColor"/><circle cx="10" cy="10.500" r="3.500" fill="var(--hole,#fff)"/></symbol>
<symbol id="rt1" viewBox="0 0 24 26"><path d="M1 2l5-2 5 2v7H1zM7 11l4-1 4 1v5H7z" fill="#f2c14e" stroke="#b8801e" stroke-width=".7"/><path d="M11 7l4-1 3 1v5h-7z" fill="#eeb53c" stroke="#b8801e" stroke-width=".7"/><path d="M4 12v12M4 18h12M16 8h8" stroke="#14148c" stroke-width="1.200" fill="none"/><path d="M15 16l4-2 4 2v6l-4 2-4-2z" fill="#f2c14e" stroke="#b8801e" stroke-width=".7"/></symbol>
<symbol id="rt2" viewBox="0 0 24 26"><ellipse cx="6" cy="2.500" rx="5" ry="2.500" fill="#e0a0c0" stroke="#902060"/><path d="M1 3v6c0 3 10 3 10 0V3z" fill="#e0a0c0" stroke="#902060"/><path d="M5 13v12M5 19h11M14 5h10" stroke="#222" stroke-width="1.200" fill="none"/><circle cx="19" cy="19" r="4.500" fill="#fff" stroke="#b03070"/><circle cx="19" cy="19" r="2" fill="none" stroke="#b03070"/></symbol>
<symbol id="rt3" viewBox="0 0 24 24"><path d="M1 4h6v18H1z" fill="#ee9a30"/><path d="M9 4h6v18H9z" fill="#33c033"/><path d="M17 5h6v17h-6z" fill="#2a88d8"/><path d="M1 4l5-4h5l-4 4zM9 4l5-4h4l-3 4zM17 5l6-5v5z" fill="#d8dde0"/></symbol>
<symbol id="rt4" viewBox="0 0 26 26"><path d="M10 4c7 0 12 5 12 11M11 1c9 0 15 6 15 14M10 7c5 0 9 4 9 8" stroke="#3a6ad0" stroke-width="1.800" fill="none"/><circle cx="8" cy="18" r="8" fill="#2a88e0" stroke="#1a4fb0"/><text x="8" y="23" font-size="13" font-weight="700" text-anchor="middle" fill="#fff" font-family="Liberation Serif">i</text></symbol>
<symbol id="rt5" viewBox="0 0 22 24"><path d="M2 1h12l6 6v16H2z" fill="#fff" stroke="#4a80c8"/><path d="M14 1v6h6" fill="#dde" stroke="#4a80c8"/><circle cx="11" cy="14" r="6" fill="#2e9a6a"/><path d="M7 10c3-1 5 1 4 3l-4 1zM13 16l3-2v4z" fill="#3a78d0"/></symbol>
<symbol id="rt6" viewBox="0 0 24 24"><circle cx="12" cy="12" r="11" fill="#e8ecf0" stroke="#5a6a78" stroke-width="1.600"/><circle cx="12" cy="12" r="8.500" fill="#fff"/><path d="M12 5v7h6" stroke="#111" stroke-width="1.500" fill="none"/></symbol>
<symbol id="rt7" viewBox="0 0 24 24"><path d="M10 22 20 5" stroke="#556" stroke-width="2.500"/><path d="M14 4l8 1 1 4-7-2z" fill="#778"/><path d="M2 17c3-3 8-3 10 0l-3 5H4z" fill="#778"/><path d="M2 21h6l2 2H2z" fill="#e88a20"/></symbol>
<symbol id="list" viewBox="0 0 14 20"><path d="M2 2h3v3H2zM2 8h3v3H2zM2 14h3v3H2z" fill="#fff" stroke="#3a3ac8"/><path d="M8 3h5M8 9h5M8 15h5" stroke="#444"/></symbol>
<symbol id="auto" viewBox="0 0 20 20"><path d="M2 1h12v8H2zM1 12h14v7H1z" fill="#fff" stroke="#222"/><path d="M8 3v13" stroke="#c83232" stroke-width="1.400"/><circle cx="8" cy="4" r="1.500" fill="#c83232"/><circle cx="8" cy="16" r="1.500" fill="#c83232"/><path d="M12 8l6-6" stroke="#d8b040" stroke-width="3"/></symbol>
<symbol id="flag" viewBox="0 0 16 16"><path d="M2 1c4-1 8 1 12 0l-1 9c-4 1-7-1-10 0z" fill="#222"/><path d="M4 2h3v3H4zM10 2h3v3h-3zM7 5h3v3H7z" fill="#fff"/><path d="M2 1l2 14" stroke="#3a3aa0" stroke-width="1.300"/></symbol>
<symbol id="specify" viewBox="0 0 24 24"><path d="M2 11h17v10H2z" fill="#fff" stroke="#111" stroke-width="1.200"/><circle cx="9" cy="17" r="1.800" fill="#d02020"/><path d="M15 3v13M9 9h13" stroke="#d83a10" stroke-width="1.400"/><path d="M15 1l-3 3h6zM15 17l-3-3h6zM8 9l3-3v6zM23 9l-3-3v6z" fill="#d83a10"/></symbol>
<symbol id="orient" viewBox="0 0 24 24"><path d="M3 12C3 6 9 1 15 3l3-2v7h-7l3-2c-4-1-8 1-8 6z" fill="#253a9c"/><path d="M21 12c0 4-3 8-8 9l-3 2v-6h6l-2 1c3-1 4-3 4-6z" fill="#253a9c"/><path d="M8 15l6-3 6 3v6H8z" fill="#f7df50" stroke="#a88a20"/></symbol>
<symbol id="refresh" viewBox="0 0 20 20"><path d="M13 3.500A7.500 7.500 0 1 1 5 5" fill="none" stroke="currentColor" stroke-width="2.200"/><path d="M7 1v7H1z" fill="currentColor" transform="rotate(-10 6 5)"/></symbol>
<symbol id="close" viewBox="0 0 20 20"><path d="M3 3l14 14M17 3 3 17" stroke="currentColor" stroke-width="2.200"/></symbol>
<symbol id="chev-up" viewBox="0 0 16 12"><path d="M2 10l6-7 6 7" fill="none" stroke="currentColor" stroke-width="2.800"/></symbol>
<symbol id="chev-down" viewBox="0 0 16 12"><path d="M2 2l6 7 6-7" fill="none" stroke="currentColor" stroke-width="2.800"/></symbol>
</defs>
</svg>

<div class="app">
  <header class="titlebar">
    <span class="logo">NX</span><span class="vsep"></span>
    <svg class="qi ml10"><use href="#save"/></svg><span class="vsep ml5"></span>
    <svg class="qi ml8"><use href="#undo"/></svg><span class="tri ml6"></span>
    <svg class="qi ml8"><use href="#redo"/></svg><span class="vsep ml6"></span>
    <svg class="qi ml7"><use href="#cut"/></svg>
    <svg class="qi ml7"><use href="#copy"/></svg>
    <svg class="qi ml7"><use href="#paste"/></svg><span class="vsep ml5"></span>
    <svg class="qi ml6"><use href="#layers"/></svg><span class="tri ml8"></span><span class="vsep ml7"></span>
    <svg class="qi ml6"><use href="#brush"/></svg><span class="vsep ml6"></span>
    <svg class="qi ml6"><use href="#switch"/></svg><span class="qtext ml4">切换窗口</span>
    <svg class="qi ml7"><use href="#window"/></svg><span class="qtext ml4">窗口</span>
    <span class="tri ml4"></span><span class="tri tri-lined ml8"></span>
    <span class="apptitle">NX 12 - 制图</span>
    <span class="siemens">SIEMENS</span>
    <span class="winbtn win-min"></span>
    <span class="winbtn win-restore"></span>
    <svg class="winclose"><use href="#close"/></svg>
  </header>

  <nav class="tabs">
    <span class="tab tab-file">文件(F)</span>
    <span class="tab tab-active">主页</span>
    <span class="tab">制图工具</span>
    <span class="tab">分析</span>
    <span class="tab">视图</span>
    <span class="tab">工具</span>
    <span class="tab">应用模块</span>
    <span class="tab">装配</span>
    <div class="tabs-right">
      <div class="cmdsearch"><span>查找命令</span><svg class="i16"><use href="#mag"/></svg></div>
      <svg class="i16 tr-ribmin"><use href="#ribmin"/></svg>
      <span class="chev-line"></span>
      <svg class="i16 tr-help"><use href="#help"/></svg>
      <svg class="i16 tr-cap"><use href="#cap"/></svg>
      <span class="tutorial">教程</span>
    </div>
  </nav>

  <section class="ribbon">
    <div class="rgroup g-new">
      <div class="bigbtn"><svg class="big"><use href="#newsheet"/></svg><span>新建图纸页</span><i class="tri"></i></div>
    </div>
    <div class="rgroup g-view">
      <div class="rbody">
        <div class="bigbtn"><svg class="big"><use href="#wizard"/></svg><span>视图创建向导</span></div>
        <div class="bigbtn ml7"><svg class="big"><use href="#basicview"/></svg><span>基本视图</span></div>
        <div class="igrid cols2 ml6">
          <svg><use href="#g1"/></svg><svg><use href="#g2"/></svg>
          <svg><use href="#g3"/></svg><svg><use href="#g4"/></svg>
          <svg><use href="#g5"/></svg><svg><use href="#g6"/></svg>
        </div>
        <div class="bigbtn ml4"><svg class="big"><use href="#update"/></svg><span>更新视图</span><i class="tri"></i></div>
      </div>
      <div class="rlabel lbl-view"><span>视图</span><i class="tri"></i></div>
    </div>
    <div class="rgroup g-dim">
      <div class="rbody">
        <div class="bigbtn quick"><svg class="big"><use href="#quick"/></svg><span>快速</span></div>
        <div class="igrid cols3 ml5">
          <svg><use href="#dim1"/></svg><svg><use href="#dim2"/></svg><svg><use href="#dim3"/></svg>
          <svg><use href="#dim4"/></svg><svg><use href="#dim5"/></svg><svg><use href="#dim6"/></svg>
          <svg><use href="#dim7"/></svg>
        </div>
      </div>
      <div class="rlabel lbl-dim"><span>尺寸</span></div>
    </div>
    <div class="rgroup g-note">
      <div class="rbody">
        <svg class="abox"><use href="#bigA"/></svg>
        <div class="igrid cols5 ml5">
          <svg><use href="#ldr"/></svg><svg><use href="#balloon"/></svg><svg><use href="#xm"/></svg><svg><use href="#target"/></svg><i class="tri"></i>
          <svg><use href="#symA"/></svg><svg><use href="#rough"/></svg><svg><use href="#cen"/></svg><svg><use href="#hatch"/></svg>
        </div>
      </div>
    </div>
    <div class="rgroup g-sketch">
      <div class="rbody">
        <div class="skbox">
          <svg><use href="#sk1"/></svg><svg><use href="#sk2"/></svg><svg><use href="#sk3"/></svg><svg><use href="#sk4"/></svg>
          <svg><use href="#sk5"/></svg><svg><use href="#sk6"/></svg><svg><use href="#sk7"/></svg><svg><use href="#sk8"/></svg>
        </div>
        <div class="skarrows"><i class="tri tri-up"></i><i class="tri"></i></div>
      </div>
    </div>
    <div class="rgroup g-table">
      <div class="tblist">
        <div class="tbitem"><svg><use href="#tb1"/></svg><span>表格注释</span></div>
        <div class="tbitem"><svg><use href="#tb2"/></svg><span>零件明细表</span></div>
        <div class="tbitem"><svg><use href="#r1"/></svg><span>自动符号标注</span></div>
      </div>
      <div class="rlabel lbl-table"><span>表</span><i class="tri"></i></div>
    </div>
    <div class="rgroup g-edit">
      <div class="bigbtn"><svg class="big"><use href="#editA"/></svg><span>编辑设置</span></div>
    </div>
    <div class="rgroup g-std">
      <div class="rbody rows">
        <div class="irow">
          <svg><use href="#s1"/></svg><svg><use href="#s2"/></svg><svg><use href="#s3"/></svg><b></b><svg><use href="#s4"/></svg>
        </div>
        <div class="irow">
          <svg><use href="#s5"/></svg><svg><use href="#s6"/></svg><svg><use href="#s7"/></svg><b></b><svg><use href="#cubebar"/></svg>
        </div>
      </div>
      <div class="rlabel lbl-std"><span>标准化工具...</span><i class="tri"></i></div>
    </div>
    <div class="rgroup g-draft">
      <div class="rbody rows">
        <div class="irow">
          <svg><use href="#d1"/></svg><svg><use href="#d2"/></svg><svg><use href="#d3"/></svg><svg><use href="#d4"/></svg><svg><use href="#d5"/></svg><b></b>
          <svg><use href="#cubebar"/></svg><b></b><svg><use href="#d7"/></svg><b></b>
          <svg><use href="#d8"/></svg><svg><use href="#d9"/></svg><svg><use href="#d10"/></svg><b></b>
          <svg><use href="#d11"/></svg><svg><use href="#d12"/></svg><svg><use href="#d13"/></svg><svg><use href="#d14"/></svg><svg><use href="#d15"/></svg><svg><use href="#d16"/></svg>
        </div>
        <div class="irow">
          <svg><use href="#r1"/></svg><svg><use href="#r2"/></svg><svg><use href="#r3"/></svg><svg><use href="#r4"/></svg><svg><use href="#r5"/></svg><svg><use href="#r6"/></svg><svg><use href="#r7"/></svg><svg><use href="#r8"/></svg><svg><use href="#r9"/></svg><svg><use href="#r10"/></svg><b></b>
          <svg><use href="#r11"/></svg><svg><use href="#r12"/></svg><b></b><svg><use href="#r13"/></svg>
        </div>
      </div>
      <div class="rlabel lbl-draft"><span>制图工具 - GC工具箱</span><i class="tri"></i></div>
    </div>
    <div class="rgroup g-qf">
      <div class="rbody rows">
        <div class="irow">
          <svg><use href="#q1"/></svg><b></b><svg><use href="#qx"/></svg><svg><use href="#num1"/></svg><svg><use href="#num2"/></svg><svg><use href="#num2"/></svg><svg><use href="#num2"/></svg><svg><use href="#boxx"/></svg><svg><use href="#parx"/></svg><svg><use href="#t1"/></svg><svg><use href="#t2"/></svg><svg><use href="#t2"/></svg><svg><use href="#t3"/></svg>
        </div>
        <div class="irow">
          <svg><use href="#qr1"/></svg><svg><use href="#qr2"/></svg><b></b><svg><use href="#qr3"/></svg><svg><use href="#qr4"/></svg><svg><use href="#qr5"/></svg>
        </div>
      </div>
      <div class="rlabel lbl-qf"><span>尺寸快速格式化工具 - GC工具箱</span><i class="tri"></i></div>
    </div>
    <div class="rgroup g-rest">
      <div class="rbody"></div>
      <div class="rlabel lbl-rest"><i class="tri"></i></div>
    </div>
  </section>

  <div class="toolbar">
    <svg class="i16 tb-menu"><use href="#menu"/></svg><span class="qtext ml4">菜单(M)</span><span class="tri ml5"></span><span class="vsep tb-sep ml8"></span>
    <div class="select tb-sel1"><span>视图</span><i class="tri"></i></div>
    <div class="select tb-sel2"><span>整个装配</span><i class="tri"></i></div>
    <svg class="i16 tb-line"><use href="#line"/></svg>
    <svg class="i16 ml8"><use href="#face"/></svg><span class="vsep tb-sep ml8"></span>
    <svg class="i16 ml10"><use href="#vfit"/></svg>
    <svg class="i16 ml7"><use href="#vhand"/></svg>
    <svg class="i16 ml10"><use href="#vgrid"/></svg><span class="tri ml8"></span>
    <svg class="i16 ml7"><use href="#vdia"/></svg><span class="tri ml8"></span><span class="vsep tb-sep ml10"></span>
    <span class="tri tb-end"></span>
  </div>

  <main class="workspace">
    <aside class="rail">
      <svg class="rail-gear"><use href="#gear"/></svg>
      <div class="rail-tab"><svg class="rail-icon"><use href="#rt1"/></svg></div>
      <svg class="rail-icon mt7"><use href="#rt2"/></svg>
      <svg class="rail-icon mt17"><use href="#rt3"/></svg>
      <svg class="rail-icon mt27"><use href="#rt4"/></svg>
      <svg class="rail-icon mt28"><use href="#rt5"/></svg>
      <svg class="rail-icon mt28"><use href="#rt6"/></svg>
      <svg class="rail-icon mt16"><use href="#rt7"/></svg>
    </aside>

    <section class="navpanel">
      <div class="navtitle"><span>装配导航器</span><span class="maxbox"></span></div>
      <div class="ntable">
        <div class="nhead">
          <div class="nh nh1">描述性部件名<i class="tri tri-up"></i></div>
          <div class="nh nh2">信息</div>
          <div class="nh nh3">只读</div>
        </div>
        <div class="nbody">
          <div class="nrow"><span class="ncol1 lvl-sec"><span class="conn conn-sec"></span><svg class="i16"><use href="#folder"/></svg><span class="ntext">截面</span></span></div>
          <div class="nrow"><span class="ncol1 lvl-root"><span class="expand"></span><svg class="chk"><use href="#check"/></svg><svg class="i16"><use href="#cubes"/></svg><span class="ntext bold">_model1_dwg1（顺序...</span></span><span class="ncol2"></span><svg class="i14 ncol3"><use href="#save"/></svg></div>
          <div class="nrow"><span class="ncol1 lvl-child"><span class="conn conn-child"></span><svg class="chk"><use href="#check"/></svg><svg class="i16"><use href="#cubedoc"/></svg><span class="ntext">_model1</span></span><svg class="i16 ncol2i"><use href="#book"/></svg><svg class="i14 ncol3"><use href="#save"/></svg></div>
        </div>
        <div class="hscroll nscroll"><span></span></div>
      </div>
      <div class="navdivider"></div>
      <div class="navfold fold1"><span>预览</span><svg class="chev"><use href="#chev-down"/></svg></div>
      <div class="navfold fold2"><span>相关性</span><svg class="chev"><use href="#chev-down"/></svg></div>
    </section>

    <section class="graphics">
      <div class="gtabs"><svg class="i16"><use href="#partblue"/></svg></div>
      <div class="canvas">
        <div class="sheetlines"></div>
        <div class="pick"></div>
        <span class="sheetname">"A0_1"</span>
      </div>
    </section>
  </main>

  <footer class="status">指定放置视图的位置</footer>
  <div class="strip"></div>
</div>

<section class="dialog">
  <div class="dlg-title">
    <svg class="dlg-gear"><use href="#gear"/></svg><span>基本视图</span>
    <svg class="dlg-ctl dlg-refresh"><use href="#refresh"/></svg>
    <svg class="dlg-ctl"><use href="#close"/></svg>
  </div>
  <div class="dlg-main">
    <div class="dlg-content">
      <div class="sec sec-part">
        <div class="sec-head"><span>部件</span><svg class="chev"><use href="#chev-up"/></svg></div>
        <div class="prow pick-row"><span>选择部件</span><span class="sqbtn"><svg><use href="#cube"/></svg></span></div>
        <div class="grp grp-loaded">
          <div class="grp-head"><span>已加载的部件</span><svg class="chev-s"><use href="#chev-up"/></svg></div>
          <div class="frow f-search"><span>搜索</span><span class="input"></span><span class="sbtn"><svg><use href="#mag"/></svg></span></div>
          <div class="frow f-style"><span>视图样式</span><div class="select dsel"><svg class="sel-i narrow"><use href="#list"/></svg><span class="sel-gap">列表</span><i class="tri"></i></div></div>
          <div class="dtable">
            <div class="dhead"><div class="dh1">文件名<i class="tri tri-up"></i></div><div class="dh2">描述</div></div>
            <div class="dbody">
              <div class="drow selected"><svg class="i16"><use href="#partblue"/></svg><span class="dname">_model1.prt</span></div>
              <div class="drow"><svg class="i16"><use href="#draft"/></svg><span class="dname plain">_model1_dwg1....</span></div>
            </div>
            <div class="hscroll dscroll"><span></span></div>
          </div>
        </div>
        <div class="grp-closed"><span>最近访问的部件</span><svg class="chev-s"><use href="#chev-down"/></svg></div>
        <div class="prow"><span>打开</span><span class="sqbtn"><svg><use href="#folderopen"/></svg></span></div>
      </div>
      <div class="sec sec-origin">
        <div class="sec-head"><span>视图原点</span><svg class="chev"><use href="#chev-up"/></svg></div>
        <div class="prow spec-row"><span class="spec"><svg class="flag"><use href="#flag"/></svg>指定位置</span><span class="sqbtn yellow"><svg><use href="#specify"/></svg></span></div>
        <div class="grp grp-place">
          <div class="grp-head"><span>放置</span><svg class="chev-s"><use href="#chev-up"/></svg></div>
          <div class="frow f-method"><span>方法</span><div class="select dsel"><svg class="sel-i"><use href="#auto"/></svg><span>自动判断</span><i class="tri"></i></div></div>
          <div class="track"><span>跟踪</span><svg class="chev-s"><use href="#chev-down"/></svg></div>
        </div>
      </div>
      <div class="sec sec-model">
        <div class="sec-head"><span>模型视图</span><svg class="chev"><use href="#chev-up"/></svg></div>
        <div class="prow m-sel"><span>要使用的模型视图</span><div class="select msel"><span>俯视图</span><i class="tri"></i></div></div>
        <div class="prow"><span>定向视图工具</span><span class="sqbtn"><svg><use href="#orient"/></svg></span></div>
      </div>
    </div>
    <div class="vscroll"><i class="tri tri-up"></i><span class="thumb"></span><i class="tri vdown"></i></div>
  </div>
  <div class="dlg-foot"><span class="closebtn">关闭</span></div>
</section>

<div class="monitor">
  <div class="mon-pill">
    <div class="mon-text">
      <div class="mon-line1"><span class="mon-up">↑</span><span>0K/s</span></div>
      <div class="mon-line2">CPU <em>44°C</em></div>
    </div>
    <span class="mon-plus">+</span><span class="mon-dot"></span>
  </div>
  <div class="mon-glow g-a"></div>
  <div class="mon-glow g-b"></div>
  <div class="mon-ring"><b>33</b><small>%</small></div>
</div>

<div class="watermark">UG爱好者论坛@rc1032926414</div>
<div class="stat-icons"><svg class="i16"><use href="#g4"/></svg><svg class="i16"><use href="#ribmin"/></svg></div>
</body>
</html>
```
FILE: styles.css
```css
* { box-sizing: border-box; }
html, body { margin: 0; height: 100%; overflow: hidden; }
body { font: 14px/18px "Open Sans", "Noto Sans CJK SC", sans-serif; color: #222; background: #fff; }
.defs { position: absolute; width: 0; height: 0; }
.app { display: flex; flex-direction: column; height: 1048px; }
i { font-style: normal; }

.ml4 { margin-left: 4px; } .ml5 { margin-left: 5px; } .ml6 { margin-left: 6px; }
.ml7 { margin-left: 7px; } .ml8 { margin-left: 8px; } .ml10 { margin-left: 10px; }
.mt7 { margin-top: 7px; } .mt16 { margin-top: 16px; } .mt17 { margin-top: 17px; }
.mt27 { margin-top: 27px; } .mt28 { margin-top: 28px; }

.tri { display: inline-block; flex: none; width: 0; height: 0; border-left: 4px solid transparent; border-right: 4px solid transparent; border-top: 5px solid #222; }
.tri-up { border-top: 0; border-bottom: 5px solid #222; }
.tri-lined { position: relative; }
.tri-lined::before { content: ""; position: absolute; left: -4px; top: -8px; width: 8px; height: 1px; background: #222; }
.vsep { flex: none; width: 1px; height: 24px; background: #ddd; }
.i16 { width: 16px; height: 16px; flex: none; }
.i14 { width: 14px; height: 14px; flex: none; }

/* title bar */
.titlebar { flex: none; height: 30px; display: flex; align-items: center; background: #fff; }
.logo { width: 46px; padding-left: 4px; font: 700 26px/30px "Liberation Sans", sans-serif; color: #8d9ca8; }
.qi { width: 16px; height: 16px; flex: none; }
.qtext { font-size: 14px; white-space: nowrap; flex: none; }
.apptitle { margin-left: 603px; font-size: 15px; }
.siemens { margin-left: auto; font: 700 16px/30px "Open Sans", sans-serif; color: #009a9a; letter-spacing: -.3px; }
.winbtn { flex: none; display: block; }
.win-min { margin-left: 33px; margin-top: 10px; width: 9px; height: 2px; background: #555; }
.win-restore { margin-left: 22px; width: 11px; height: 10px; border: 1.500px solid #444; box-shadow: 2px -2px 0 -0.5px #fff, 3px -3px 0 -.5px #444; }
.winclose { width: 14px; height: 14px; margin-left: 18px; margin-right: 10px; color: #333; }

/* tabs */
.tabs { flex: none; height: 32px; display: flex; background: #dcdcdc; font-size: 16px; line-height: 32px; }
.tab { padding: 0 13px; white-space: nowrap; }
.tab-file { width: 91px; padding: 0; margin-right: 2px; text-align: center; background: #55a0bb; color: #fff; }
.tab-active { background: #fff; color: #0a6e8f; border-top: 1px solid #ccc; line-height: 30px; }
.tabs-right { margin-left: auto; display: flex; align-items: center; padding-right: 8px; }
.cmdsearch { width: 157px; height: 24px; display: flex; align-items: center; justify-content: space-between; padding: 0 4px 0 2px; background: #fff; border: 1px solid #aaa; font-size: 14px; line-height: 22px; color: #b0b0b0; }
.tr-ribmin { margin-left: 10px; }
.chev-line { margin-left: 16px; width: 9px; height: 9px; border-left: 1.500px solid #222; border-top: 1.500px solid #222; transform: rotate(45deg) translate(2px, 2px); }
.tr-help { margin-left: 12px; }
.tr-cap { margin-left: 10px; }
.tutorial { margin-left: 3px; font-size: 15px; }

/* ribbon */
.ribbon { flex: none; height: 106px; display: flex; padding-top: 5px; background: #fff; border-bottom: 2px solid #ddd; }
.rgroup { flex: none; height: 96px; border-right: 1px solid #d8d8d8; display: flex; flex-direction: column; }
.rbody { height: 80px; display: flex; align-items: flex-start; flex: none; }
.rbody.rows { flex-direction: column; align-items: flex-start; }
.rlabel { height: 16px; display: flex; align-items: center; color: #0a7396; line-height: 20px; white-space: nowrap; }
.rlabel .tri { margin-left: auto; margin-right: 9px; }
.g-new { width: 89px; }
.g-new .bigbtn { width: 88px; }
.g-view { width: 287px; }
.g-view .rbody { padding-left: 11px; }
.lbl-view { padding-left: 117px; }
.g-dim { width: 129px; }
.g-dim .rbody { padding-left: 13px; }
.lbl-dim { padding-left: 39px; }
.g-note { width: 171px; }
.g-note .rbody { padding-left: 14px; }
.g-sketch { width: 136px; }
.g-sketch .rbody { padding-left: 7px; }
.g-table { width: 128px; }
.lbl-table { padding-left: 46px; }
.g-edit { width: 72px; }
.g-edit .bigbtn { width: 71px; }
.g-std { width: 104px; }
.lbl-std { padding-left: 2px; }
.g-draft { width: 398px; }
.lbl-draft { padding-left: 122px; }
.g-qf { width: 288px; }
.lbl-qf { padding-left: 33px; }
.g-rest { flex: 1; border-right: 0; }
.lbl-rest { justify-content: flex-end; }

.bigbtn { display: flex; flex-direction: column; align-items: center; flex: none; padding-top: 1px; white-space: nowrap; }
.big { width: 32px; height: 32px; display: block; margin-bottom: 4px; }
.bigbtn .tri { margin-top: 5px; }
.quick { width: 30px; }
.quick .big { width: 30px; height: 22px; margin: 2px 0 12px; }
.igrid { display: grid; grid-auto-rows: 26px; justify-items: center; flex: none; }
.igrid svg { width: 18px; height: 18px; margin-top: 2px; }
.cols2 { grid-template-columns: repeat(2, 25px); }
.cols3 { grid-template-columns: repeat(3, 25px); }
.cols5 { grid-template-columns: repeat(4, 25px) 20px; grid-auto-rows: 25px; }
.cols5 .tri { margin-top: 8px; }
.abox { width: 29px; height: 29px; margin-top: 1px; border: 1px solid #5a4a8a; flex: none; }
.skbox { width: 104px; height: 62px; flex: none; border: 1px solid #ccc; display: grid; grid-template-columns: repeat(4, 25.500px); grid-auto-rows: 25px; justify-items: center; align-items: center; align-content: start; }
.skbox svg { width: 18px; height: 18px; }
.skarrows { margin-left: 6px; padding-top: 10px; display: flex; flex-direction: column; gap: 20px; }
.skarrows .tri { border-top-color: #333; }
.skarrows .tri-up { border-bottom-color: #aaa; }
.tblist { height: 80px; padding-left: 14px; }
.tbitem { height: 26px; display: flex; align-items: flex-start; line-height: 20px; white-space: nowrap; }
.tbitem svg { width: 16px; height: 16px; margin: 2px 3px 0 0; flex: none; }
.irow { height: 31px; padding: 8px 0 0 5px; display: flex; align-items: flex-start; flex: none; }
.g-qf .irow { padding-left: 4px; }
.irow svg { width: 18px; height: 18px; margin: 0 2.500px; flex: none; }
.irow b { width: 1px; height: 24px; margin: -3px 2.500px 0; background: #ddd; flex: none; }

/* secondary toolbar */
.toolbar { flex: none; height: 36px; display: flex; align-items: center; padding-left: 10px; border-bottom: 1px solid #999; background: #fff; }
.tb-sep { height: 28px; }
.select { display: flex; align-items: center; justify-content: space-between; background: #fff; border: 1px solid #aaa; line-height: 22px; flex: none; }
.tb-sel1 { width: 166px; height: 26px; margin-left: 12px; padding: 0 8px 0 2px; }
.tb-sel2 { width: 170px; height: 26px; margin-left: 8px; padding: 0 8px 0 2px; }
.tb-line { margin-left: 390px; }
.tb-end { margin-left: auto; margin-right: 7px; margin-top: 10px; }

/* workspace */
.workspace { flex: none; height: 813px; display: flex; }
.rail { flex: none; width: 33px; display: flex; flex-direction: column; align-items: center; background: #dcdcdc; border-right: 1px solid #999; }
.rail-gear { width: 16px; height: 16px; margin: 4px 0 20px; color: #333; --hole: #dcdcdc; flex: none; }
.rail-tab { align-self: flex-end; width: 31px; margin-right: -1px; height: 45px; display: flex; align-items: center; justify-content: center; background: #fff; border: 1px solid #aaa; border-right: 0; flex: none; }
.rail-icon { width: 24px; height: 26px; flex: none; }
.navpanel { flex: none; width: 383px; padding-left: 5px; padding-right: 9px; display: flex; flex-direction: column; background: #fff; border-right: 1px solid #999; }
.navtitle { flex: none; height: 32px; display: flex; align-items: center; justify-content: space-between; padding: 0 8px 0 4px; font-size: 15px; }
.maxbox { width: 13px; height: 12px; border: 1px solid #222; border-top-width: 2px; margin-top: 2px; }
.ntable { flex: none; border: 1px solid #ddd; padding: 0 1px; }
.nhead { height: 25px; display: grid; grid-template-columns: 229px 81px 1fr; background: #efefef; border-bottom: 1px solid #ddd; font-size: 15px; line-height: 24px; }
.nh { padding-left: 6px; border-right: 1px solid #ddd; display: flex; align-items: center; }
.nh3 { border-right: 0; }
.nh1 .tri { margin-left: 21px; border-left-width: 6px; border-right-width: 6px; border-bottom-width: 5px; }
.nbody { height: 665px; background: linear-gradient(#000, #000) 228px 0 / 1px 100% no-repeat, linear-gradient(#eee, #eee) 310px 0 / 1px 100% no-repeat, repeating-linear-gradient(#fff 0 23px, #eee 23px 24px, #f9f9f9 24px 47px, #eee 47px 48px); }
.nrow { height: 24px; display: flex; align-items: center; position: relative; }
.ncol1 { display: flex; align-items: center; width: 229px; flex: none; }
.lvl-sec { padding-left: 19px; }
.lvl-root { padding-left: 5px; }
.lvl-child { padding-left: 40px; }
.ncol2 { width: 81px; flex: none; }
.ncol2i { margin-left: 5px; margin-right: 60px; }
.ncol3 { }
.nrow > .ncol2 + .ncol3 { margin-left: 0; }
.nrow .i14.ncol3 { position: absolute; left: 319px; }
.ntext { font-size: 15.500px; margin-left: 3px; white-space: nowrap; line-height: 24px; }
.ntext.bold { font-weight: 700; margin-left: 4px; font-size: 15px; }
.chk { width: 13px; height: 13px; flex: none; margin-right: 2px; }
.expand { width: 11px; height: 11px; margin-right: 5px; border: 1px solid #ccc; position: relative; flex: none; }
.expand::after { content: ""; position: absolute; left: 1px; top: 4px; width: 7px; height: 1px; background: #222; }
.conn { position: absolute; border-left: 1px dotted #999; border-bottom: 1px dotted #999; }
.conn-sec { left: 9px; top: 11px; width: 9px; height: 20px; border-bottom: 0; border-top: 1px dotted #999; }
.conn-child { left: 28px; top: -2px; width: 10px; height: 13px; }
.hscroll { background: #efefef; position: relative; }
.hscroll span { position: absolute; height: 6px; background: #888; }
.nscroll { height: 21px; margin-top: 2px; }
.nscroll span { left: 21px; top: 7px; width: 192px; }
.navdivider { flex: none; height: 4px; margin-top: 1px; background: #ddd; border: 1px solid #aaa; }
.navfold { flex: none; display: flex; align-items: center; justify-content: space-between; padding: 0 6px 0 7px; font-size: 18px; color: #0a7396; border-bottom: 2px solid #ccc; }
.fold1 { height: 29px; }
.fold2 { height: 28px; }
.chev { width: 16px; height: 12px; color: #0a6480; flex: none; }
.graphics { flex: 1; display: flex; flex-direction: column; min-width: 0; }
.gtabs { flex: none; height: 26px; padding: 3px 0 0 4px; background: #fff; border-bottom: 2px solid #55a0bb; }
.canvas { flex: 1; position: relative; background: #cbcbcb; }
.sheetlines { position: absolute; left: 0; right: 0; top: 42px; height: 13px; border-top: 1px solid #222; border-bottom: 1px solid #222; }
.pick { position: absolute; left: 552px; top: 204px; width: 28px; height: 28px; background: #c8eeea; border: 4px solid #0a0a0a; border-radius: 1px; }
.sheetname { position: absolute; left: 11px; bottom: 3px; font: 13px/18px "Liberation Sans", sans-serif; }

.status { flex: none; height: 23px; border-top: 1px solid #aaa; padding-left: 3px; font-weight: 700; font-size: 14px; line-height: 21px; background: #fff; }
.strip { flex: 1; background: linear-gradient(90deg, #dfe4f4, #e6f0f8 30%, #e4eef8); border-top: 1px solid #ddd; }

/* dialog */
.dialog { position: absolute; left: 445px; top: 109px; width: 401px; height: 812px; display: flex; flex-direction: column; background: #eee; border-bottom: 1px solid #ddd; border-left: 1px solid #ddd; border-right: 1px solid #ddd; }
.dlg-title { flex: none; height: 27px; margin: 0 -1px; display: flex; align-items: center; padding: 0 11px 0 10px; background: #55a0bb; color: #eef6f9; font-size: 18px; }
.dlg-gear { width: 13px; height: 13px; margin-right: 9px; --hole: #55a0bb; flex: none; }
.dlg-ctl { width: 14px; height: 14px; margin-left: 10px; flex: none; }
.dlg-refresh { margin-left: auto; }
.dlg-main { flex: none; height: 739px; padding: 4px 5px 0 5px; display: flex; }
.dlg-content { width: 369px; height: 735px; overflow: hidden; background: #fff; flex: none; }
.sec { padding: 0 10px 0 9px; }
.sec-part { height: 458px; border-bottom: 3px solid #ddd; }
.sec-origin { height: 179px; margin-top: 1px; border-bottom: 3px solid #ddd; }
.sec-model { margin-top: 1px; }
.sec-head { height: 30px; margin-left: -2px; display: flex; align-items: center; justify-content: space-between; padding-right: -4px; font-size: 18px; color: #0a7396; line-height: 30px; }
.sec-head .chev { margin-right: -4px; }
.sec-origin .sec-head, .sec-model .sec-head { height: 31px; }
.prow { height: 32px; display: flex; align-items: center; justify-content: space-between; }
.pick-row { margin-top: 4px; }
.sqbtn { width: 32px; height: 32px; display: flex; align-items: center; justify-content: center; background: #fff; border: 1px solid #aaa; flex: none; }
.sqbtn svg { width: 22px; height: 22px; }
.grp { margin-top: 2px; background: #eee; border: 1px solid #ddd; padding: 0 8px; }
.grp-loaded { height: 316px; }
.grp-place { height: 99px; }
.grp-head { height: 27px; display: flex; align-items: center; justify-content: space-between; font-size: 15px; color: #0a7396; padding-right: 0; }
.chev-s { width: 13px; height: 10px; color: #0a6480; flex: none; }
.grp-closed { height: 27px; margin-top: 2px; padding: 0 8px; display: flex; align-items: center; justify-content: space-between; background: #eee; border: 1px solid #ddd; font-size: 15px; color: #0a7396; }
.frow { display: flex; align-items: center; justify-content: space-between; font-size: 15px; }
.f-search { margin-top: 5px; height: 26px; justify-content: flex-start; }
.input { width: 270px; height: 26px; margin-left: 4px; background: #fff; border: 1px solid #aaa; }
.sbtn { width: 24px; height: 24px; margin-left: 4px; margin-top: -2px; display: flex; align-items: center; justify-content: center; border: 1px solid #aaa; background: #f5f5f5; }
.sbtn svg { width: 16px; height: 16px; }
.f-style { margin-top: 2px; height: 28px; }
.f-method { margin-top: 5px; height: 28px; }
.dsel { width: 152px; height: 28px; padding: 0 8px 0 5px; font-size: 14px; justify-content: flex-start; }
.dsel .tri { margin-left: auto; }
.sel-i { width: 16px; height: 18px; margin-right: 6px; flex: none; }
.sel-i.narrow { width: 10px; margin-right: 0; }
.sel-gap { margin-left: 11px; }
.dtable { margin-top: 2px; height: 215px; border: 1px solid #ddd; padding: 1px; background: #fff; }
.dhead { height: 24px; display: grid; grid-template-columns: 150px 1fr; background: #efefef; border-bottom: 1px solid #ddd; line-height: 23px; font-size: 14px; }
.dh1 { padding-left: 6px; border-right: 1px solid #ddd; display: flex; align-items: center; }
.dh1 .tri { margin-left: 19px; border-left-width: 6px; border-right-width: 6px; }
.dh2 { padding-left: 6px; }
.dbody { height: 168px; background: linear-gradient(#ddd, #ddd) 149px 0 / 1px 100% no-repeat, repeating-linear-gradient(#fff 0 23px, #eee 23px 24px, #f9f9f9 24px 47px, #eee 47px 48px); }
.drow { height: 24px; display: flex; align-items: center; }
.drow .i16 { margin: 0 0 0 1px; }
.dname { flex: 1; height: 23px; margin-left: 0; padding-left: 2px; font-size: 15.500px; line-height: 23px; white-space: nowrap; }
.selected { background: linear-gradient(90deg, transparent 16px, #8abfd0 16px, #8abfd0 149px, #fff 149px, #fff 150px, #8abfd0 150px); }
.dscroll { height: 21px; }
.dscroll span { left: 21px; top: 8px; width: 234px; }
.spec-row { margin-top: 3px; background: #fff; }
.spec { flex: 1; height: 32px; margin-right: 2px; display: flex; align-items: center; background: #ffdd77; padding-left: 1px; }
.flag { width: 14px; height: 14px; margin-right: 5px; }
.yellow { background: #ffdd77; border: 0; }
.track { height: 27px; margin-top: 2px; display: flex; align-items: center; justify-content: space-between; padding: 0 7px 0 8px; background: #fff; border: 1px solid #ddd; color: #0a7396; font-size: 15px; }
.m-sel { height: 28px; margin-top: 3px; margin-bottom: 2px; }
.msel { width: 152px; height: 28px; padding: 0 8px 0 4px; font-size: 14px; }
.vscroll { width: 20px; flex: none; display: flex; flex-direction: column; align-items: center; position: relative; background: #eee; padding-top: 8px; }
.vscroll .tri { border-top-color: #888; }
.vscroll .tri-up { border-bottom-color: #888; border-top: 0; }
.thumb { width: 10px; height: 483px; margin-top: 5px; background: #888; border-radius: 1px; }
.vdown { margin-top: 217px; }
.dlg-foot { flex: none; display: flex; justify-content: flex-end; padding: 8px 15px 0 0; }
.closebtn { width: 60px; height: 28px; background: #75b4cb; color: #eef6f9; text-align: center; font-size: 15px; line-height: 28px; }

/* floating monitor */
.monitor { position: absolute; left: 1415px; top: 952px; width: 190px; height: 88px; }
.mon-pill { position: absolute; left: 44px; top: 19px; width: 144px; height: 49px; background: linear-gradient(#fafafa, #f0f0f0); border-radius: 0 25px 25px 0; box-shadow: 0 2px 5px rgba(0,0,0,.15); }
.mon-text { position: absolute; left: 46px; top: 4px; width: 60px; font-size: 12px; line-height: 18px; }
.mon-line1 { display: flex; justify-content: space-between; align-items: center; color: #111; height: 18px; margin-bottom: 7px; }
.mon-up { color: #3a9cf0; font-weight: 700; font-size: 13px; }
.mon-line2 { color: #555; white-space: nowrap; font-family: "Liberation Sans", sans-serif; }
.mon-line2 em { font-style: normal; color: #22d670; }
.mon-plus { position: absolute; left: 114px; top: 13px; width: 20px; height: 20px; border-radius: 50%; background: #2f8cf0; color: #fff; font: 700 20px/19px "Liberation Sans", sans-serif; text-align: center; }
.mon-dot { position: absolute; left: 131px; top: 12px; width: 8px; height: 8px; border-radius: 50%; background: #f05038; }
.mon-glow { position: absolute; border-radius: 50%; background: #3fd470; opacity: .6; }
.g-a { left: 5px; top: 0; width: 78px; height: 78px; }
.g-b { left: 2px; top: 10px; width: 80px; height: 78px; }
.mon-ring { position: absolute; left: 13px; top: 13px; width: 62px; height: 62px; border-radius: 50%; background: #f6f6f6; display: flex; align-items: center; justify-content: center; color: #555; font-family: Lato, sans-serif; padding-top: 2px; }
.mon-ring b { font-weight: 300; font-size: 29px; letter-spacing: -1px; line-height: 32px; }
.mon-ring small { font-size: 15px; margin-top: 8px; }

.watermark { position: absolute; left: 1716px; top: 1027px; font: 13px/18px "Liberation Mono", "Noto Sans CJK SC", monospace; letter-spacing: .15px; color: #444; white-space: nowrap; }
.stat-icons { position: absolute; left: 1829px; top: 1019px; display: flex; gap: 5px; opacity: .8; }
```
